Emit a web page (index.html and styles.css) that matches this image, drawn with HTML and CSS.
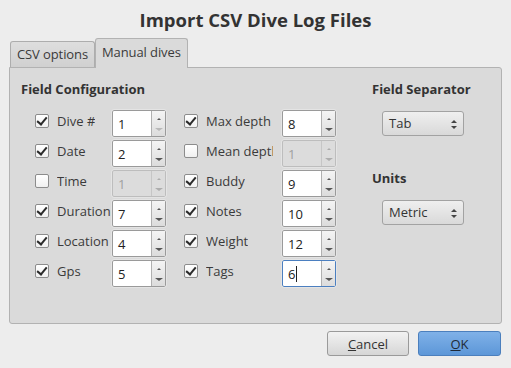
FILE: index.html
```html
<!DOCTYPE html>
<html lang="en">
<head>
  <meta charset="UTF-8">
  <title>Import CSV Dive Log Files</title>
  <link rel="stylesheet" href="styles.css">
</head>
<body>
  <h1 class="title">Import CSV Dive Log Files</h1>

  <div class="tabs">
    <div class="tab">CSV options</div>
    <div class="tab active">Manual dives</div>
  </div>

  <div class="panel">
    <div class="fields">
      <h2>Field Configuration</h2>
      <div class="grid">
        <label class="check"><span class="box on"></span><span class="txt">Dive #</span></label>
        <div class="spin"><span class="val">1</span><span class="btns"><i class="up"></i><i class="dn off"></i></span></div>
        <label class="check"><span class="box on"></span><span class="txt">Max depth</span></label>
        <div class="spin"><span class="val">8</span><span class="btns"><i class="up"></i><i class="dn"></i></span></div>

        <label class="check"><span class="box on"></span><span class="txt">Date</span></label>
        <div class="spin"><span class="val">2</span><span class="btns"><i class="up"></i><i class="dn"></i></span></div>
        <label class="check"><span class="box"></span><span class="txt">Mean depth</span></label>
        <div class="spin disabled"><span class="val">1</span><span class="btns"><i class="up"></i><i class="dn"></i></span></div>

        <label class="check"><span class="box"></span><span class="txt">Time</span></label>
        <div class="spin disabled"><span class="val">1</span><span class="btns"><i class="up"></i><i class="dn"></i></span></div>
        <label class="check"><span class="box on"></span><span class="txt">Buddy</span></label>
        <div class="spin"><span class="val">9</span><span class="btns"><i class="up"></i><i class="dn"></i></span></div>

        <label class="check"><span class="box on"></span><span class="txt">Duration</span></label>
        <div class="spin"><span class="val">7</span><span class="btns"><i class="up"></i><i class="dn"></i></span></div>
        <label class="check"><span class="box on"></span><span class="txt">Notes</span></label>
        <div class="spin"><span class="val">10</span><span class="btns"><i class="up"></i><i class="dn"></i></span></div>

        <label class="check"><span class="box on"></span><span class="txt">Location</span></label>
        <div class="spin"><span class="val">4</span><span class="btns"><i class="up"></i><i class="dn"></i></span></div>
        <label class="check"><span class="box on"></span><span class="txt">Weight</span></label>
        <div class="spin"><span class="val">12</span><span class="btns"><i class="up"></i><i class="dn"></i></span></div>

        <label class="check"><span class="box on"></span><span class="txt">Gps</span></label>
        <div class="spin"><span class="val">5</span><span class="btns"><i class="up"></i><i class="dn"></i></span></div>
        <label class="check"><span class="box on"></span><span class="txt">Tags</span></label>
        <div class="spin focus"><span class="val">6<span class="caret"></span></span><span class="btns"><i class="up"></i><i class="dn"></i></span></div>
      </div>
    </div>

    <div class="side">
      <h2>Field Separator</h2>
      <div class="combo">Tab<span class="arrows"><i class="up"></i><i class="dn"></i></span></div>
      <h2 class="units">Units</h2>
      <div class="combo">Metric<span class="arrows"><i class="up"></i><i class="dn"></i></span></div>
    </div>
  </div>

  <div class="footer">
    <button class="btn"><u>C</u>ancel</button>
    <button class="btn ok"><u>O</u>K</button>
  </div>
</body>
</html>
```

FILE: styles.css
```css
body {
  margin: 0;
  width: 511px;
  height: 368px;
  background: #ededed;
  color: #333;
  font-family: "Open Sans", "DejaVu Sans", sans-serif;
  font-size: 13px;
  overflow: hidden;
}

.title {
  margin: 0;
  height: 38px;
  line-height: 40px;
  text-align: center;
  font-size: 18.5px;
  font-weight: bold;
  color: #333;
}

.tabs {
  display: flex;
  align-items: flex-end;
  height: 29px;
  padding-left: 10px;
}
.tab {
  height: 25px;
  line-height: 24px;
  padding: 0 6px;
  border: 1px solid #adadad;
  border-bottom: none;
  border-radius: 3px 3px 0 0;
  background: linear-gradient(#dedede, #d0d0d0);
  color: #3a3a3a;
  letter-spacing: -0.1px;
}
.tab.active {
  height: 29px;
  line-height: 26px;
  margin-bottom: -1px;
  position: relative;
  background: #dadada;
  border-color: #b2b2b2;
}

.panel {
  display: flex;
  margin-left: 9px;
  width: 491px;
  height: 255px;
  border: 1px solid #b2b2b2;
  border-radius: 0 3px 3px 3px;
  background: #dadada;
}

h2 {
  margin: 0;
  font-size: 13px;
  font-weight: bold;
  line-height: 18px;
  color: #333;
}

.fields {
  padding: 12px 0 0 11px;
  width: 315px;
}
.grid {
  display: grid;
  grid-template-columns: 77px 72px 98px 54px;
  row-gap: 3px;
  margin: 12px 0 0 14px;
}

.check {
  display: flex;
  align-items: center;
  height: 27px;
  padding-bottom: 6px;
  box-sizing: border-box;
}
.box {
  flex: none;
  width: 12px;
  height: 12px;
  border: 1px solid #8c8c8c;
  border-radius: 2px;
  background: linear-gradient(#ffffff, #f0f0f0);
  position: relative;
}
.box.on::after {
  content: "";
  position: absolute;
  left: 3px;
  top: 0px;
  width: 4px;
  height: 8px;
  border: solid #2a2a2a;
  border-width: 0 2px 2px 0;
  transform: rotate(40deg);
}
.txt {
  margin-left: 8px;
  max-width: 67px;
  overflow: hidden;
  white-space: nowrap;
  color: #3a3a3a;
}

.spin {
  display: flex;
  width: 54px;
  height: 27px;
  box-sizing: border-box;
  border: 1px solid #9a9a9a;
  border-radius: 2px;
  background: #fff;
  outline: 1px solid #e4e4e4;
}
.spin .val {
  flex: 1;
  padding: 3px 0 0 5px;
  color: #222;
  font-size: 13px;
  line-height: 20px;
}
.spin .btns {
  width: 13px;
  border-left: 1px solid #b0b0b0;
  background: linear-gradient(#f4f4f4, #dcdcdc);
  display: flex;
  flex-direction: column;
  justify-content: space-between;
  align-items: center;
  padding: 7px 0 5px;
}
.spin.disabled { background: #dcdcdc; border-color: #bdbdbd; }
.spin.disabled .val { color: #a0a0a0; }
.spin.disabled .btns { background: #dcdcdc; border-left-color: #c6c6c6; }
.spin.disabled i { opacity: 0.35; }
.spin.focus { border-color: #4b7fc0; }
.caret {
  display: inline-block;
  width: 1px;
  height: 16px;
  margin-left: 1px;
  vertical-align: -3px;
  background: #222;
}

i.up, i.dn {
  display: block;
  width: 0;
  height: 0;
  border-left: 2px solid transparent;
  border-right: 2px solid transparent;
}
i.up { border-bottom: 2px solid #555; }
i.dn { border-left-width: 4px; border-right-width: 4px; border-top: 3px solid #555; }
i.dn.off { border-top-color: #b8b8b8; }

.side {
  padding: 12px 0 0 36px;
}
.combo {
  position: relative;
  width: 82px;
  height: 25px;
  box-sizing: border-box;
  margin: 13px 0 0 10px;
  padding: 0 0 0 6px;
  line-height: 22px;
  border: 1px solid #a2a2a2;
  border-radius: 3px;
  background: linear-gradient(#efefef, #d9d9d9);
  color: #333;
}
.combo .arrows {
  position: absolute;
  right: 6px;
  top: 8px;
  height: 9px;
  display: flex;
  flex-direction: column;
  justify-content: space-between;
  align-items: center;
}
.combo i.up { border-left-width: 3px; border-right-width: 3px; border-bottom-width: 3px; border-bottom-color: #444; }
.combo i.dn { border-left-width: 3px; border-right-width: 3px; border-top-color: #444; }
.units { margin-top: 33px; }

.footer {
  display: flex;
  justify-content: flex-end;
  gap: 9px;
  padding: 7px 10px 0 0;
}
.btn {
  width: 82px;
  height: 25px;
  border: 1px solid #9a9a9a;
  border-radius: 3px;
  background: linear-gradient(#f2f2f2, #d6d6d6);
  font-family: inherit;
  font-size: 13px;
  color: #333;
  padding: 0;
}
.btn.ok {
  width: 83px;
  border-color: #4b7fbd;
  background: linear-gradient(#7fb1e8, #5d97d8);
  color: #1f2a38;
}
```
